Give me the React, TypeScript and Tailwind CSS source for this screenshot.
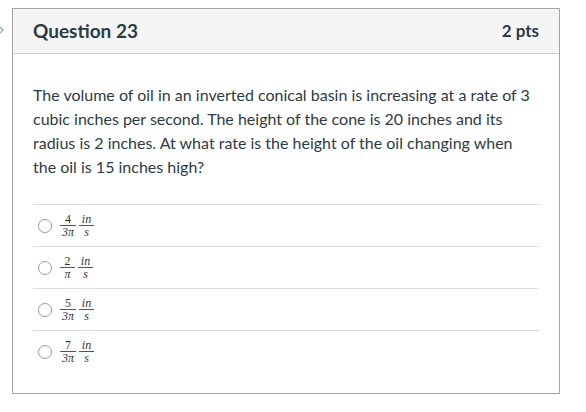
import React from "react";

function Frac({ n, d, italic }: { n: string; d: string; italic?: boolean }) {
  return (
    <span className="inline-flex flex-col items-center mx-[1px] min-w-[15px]">
      <span className={`px-[2px] leading-[10px] text-[12px] ${italic ? "italic" : ""}`}>{n}</span>
      <span className="block h-px w-full bg-[#555] my-[1px]" />
      <span className="px-[2px] leading-[10px] text-[12px] italic">{d}</span>
    </span>
  );
}

const answers = [
  { n: "4", d: "3π" },
  { n: "2", d: "π" },
  { n: "5", d: "3π" },
  { n: "7", d: "3π" },
];

export default function App() {
  return (
    <div className="relative w-[586px] h-[412px] bg-white" style={{ fontFamily: "Lato, 'Liberation Sans', sans-serif" }}>
      <svg className="absolute left-[-3px] top-[24px]" width="8" height="12" viewBox="0 0 8 12">
        <path d="M1.5 1.5 L6 6 L1.5 10.5" fill="none" stroke="#8aa0b8" strokeWidth="1.2" />
      </svg>
      <div className="pt-[8px] pl-[12px]">
        <div className="w-[548px] h-[386px] border border-[#a5a5a5] flex flex-col">
          <div className="h-[45px] bg-[#f5f5f5] border-b border-[#c7cdd1] flex items-center justify-between px-[20px]">
            <span className="text-[19px] font-bold text-[#2d3b45]">Question 23</span>
            <span className="text-[17px] font-bold text-[#2d3b45]">2 pts</span>
          </div>
          <div className="px-[20px] pt-[29px]">
            <p className="text-[16px] leading-[24px] text-[#2d3b45]">
              The volume of oil in an inverted conical basin is increasing at a rate of 3 cubic inches per second. The height of the cone is 20 inches and its radius is 2 inches. At what rate is the height of the oil changing when the oil is 15 inches high?
            </p>
            <div className="mt-[25px]">
              {answers.map((a, i) => (
                <div key={i} className="h-[42px] border-t border-[#dcdcdc] flex items-center pl-[5px]">
                  <span className="w-[14px] h-[14px] rounded-full border border-[#999] bg-white shrink-0" />
                  <span className="ml-[7px] flex items-center gap-[1px] text-[#333]" style={{ fontFamily: "'Liberation Serif', 'DejaVu Serif', serif" }}>
                    <Frac n={a.n} d={a.d} />
                    <Frac n="in" d="s" italic />
                  </span>
                </div>
              ))}
            </div>
          </div>
        </div>
      </div>
    </div>
  );
}
